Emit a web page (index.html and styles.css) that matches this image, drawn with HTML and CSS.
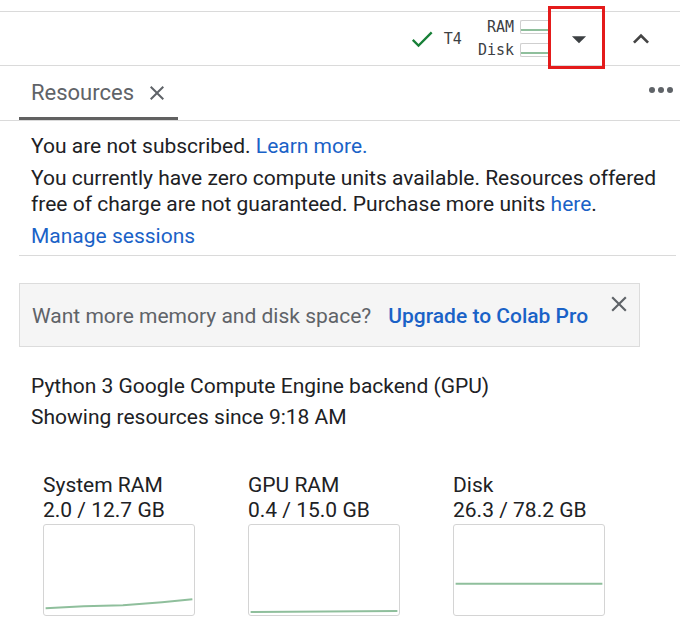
FILE: index.html
```html
<!DOCTYPE html>
<html>
<head>
<meta charset="utf-8">
<link rel="stylesheet" href="styles.css">
</head>
<body>
<div class="toolbar">
  <div class="status">
    <svg class="check" width="28" height="28" viewBox="0 0 24 24"><path d="M9 16.2 4.8 12l-1.4 1.4L9 19 21 7l-1.4-1.4z" fill="#188038"/></svg>
    <span class="mono gpu">T4</span>
    <div class="meters">
      <div class="meter"><span class="mono">RAM</span><span class="mini"><i style="bottom:2px"></i></span></div>
      <div class="meter"><span class="mono">Disk</span><span class="mini"><i style="bottom:2px"></i></span></div>
    </div>
  </div>
  <div class="drop">
    <svg width="34" height="34" viewBox="0 0 24 24"><path d="M7 10l5 5 5-5z" fill="#3c4043"/></svg>
  </div>
  <div class="collapse">
    <svg width="32" height="32" viewBox="0 0 24 24"><path d="M7.41 15.41 12 10.83l4.59 4.58L18 14l-6-6-6 6z" fill="#444"/></svg>
  </div>
</div>
<div class="tabbar">
  <div class="tab">
    <span class="tab-title">Resources</span>
    <svg class="tab-close" width="24" height="24" viewBox="0 0 24 24"><path d="M19 6.41 17.59 5 12 10.59 6.41 5 5 6.41 10.59 12 5 17.59 6.41 19 12 13.41 17.59 19 19 17.59 13.41 12z" fill="#5f6368"/></svg>
  </div>
  <div class="more"><i></i><i></i><i></i></div>
</div>
<div class="info">
  <p class="l1">You are not subscribed. <a>Learn more.</a></p>
  <p class="l2">You currently have zero compute units available. Resources offered free of charge are not guaranteed. Purchase more units <a>here</a>.</p>
  <p class="l3"><a>Manage sessions</a></p>
</div>
<div class="banner">
  <span class="banner-text">Want more memory and disk space?</span>
  <a class="banner-link">Upgrade to Colab Pro</a>
  <svg class="banner-close" width="26" height="26" viewBox="0 0 24 24"><path d="M19 6.41 17.59 5 12 10.59 6.41 5 5 6.41 10.59 12 5 17.59 6.41 19 12 13.41 17.59 19 19 17.59 13.41 12z" fill="#5f6368"/></svg>
</div>
<div class="backend">
  <p>Python 3 Google Compute Engine backend (GPU)</p>
  <p>Showing resources since 9:18 AM</p>
</div>
<div class="charts">
  <div class="chart">
    <div class="c-label">System RAM</div>
    <div class="c-value">2.0 / 12.7 GB</div>
    <svg class="c-box" width="152" height="92" viewBox="0 0 152 92"><polyline points="1,85 40,83 80,82 120,79 151,76" fill="none" stroke="#8fbf9c" stroke-width="2"/></svg>
  </div>
  <div class="chart">
    <div class="c-label">GPU RAM</div>
    <div class="c-value">0.4 / 15.0 GB</div>
    <svg class="c-box" width="152" height="92" viewBox="0 0 152 92"><polyline points="1,89 151,88" fill="none" stroke="#8fbf9c" stroke-width="2"/></svg>
  </div>
  <div class="chart">
    <div class="c-label">Disk</div>
    <div class="c-value">26.3 / 78.2 GB</div>
    <svg class="c-box" width="152" height="92" viewBox="0 0 152 92"><polyline points="1,60 151,60" fill="none" stroke="#8fbf9c" stroke-width="2"/></svg>
  </div>
</div>
</body>
</html>
```
FILE: styles.css
```css
* { box-sizing: border-box; }
body {
  margin: 0;
  font-family: Roboto, "Noto Sans", sans-serif;
  color: #202124;
  background: #fff;
  width: 680px;
  overflow: hidden;
}
p { margin: 0; }
a { color: #1a62c7; }

.toolbar {
  margin-top: 11px;
  height: 55px;
  border-top: 1px solid #dadada;
  border-bottom: 1px solid #dadada;
  display: flex;
  justify-content: flex-end;
  align-items: center;
}
.status {
  display: flex;
  align-items: center;
  height: 100%;
}
.check { margin-right: 8px; }
.mono {
  font-family: "DejaVu Sans Mono", "Liberation Mono", monospace;
  font-size: 15px;
  color: #3c4043;
}
.gpu { margin-right: 16px; }
.meters {
  display: flex;
  flex-direction: column;
  gap: 5px;
  align-items: flex-end;
}
.meter {
  display: flex;
  align-items: center;
  gap: 6px;
  height: 18px;
}
.mini {
  position: relative;
  width: 28px;
  height: 14px;
  border: 1px solid #cfcfcf;
  border-right: none;
  border-radius: 2px 0 0 2px;
  display: block;
}
.mini i {
  position: absolute;
  left: 0;
  right: 0;
  height: 2px;
  background: #8fbf9c;
}
.drop {
  position: relative;
  width: 57px;
  height: 100%;
  display: flex;
  align-items: center;
  justify-content: center;
  padding-left: 4px;
}
.drop::after {
  content: "";
  position: absolute;
  left: 0;
  right: 0;
  top: -6px;
  bottom: -4px;
  border: 3px solid #e41b1b;
}
.collapse {
  width: 75px;
  height: 100%;
  display: flex;
  align-items: center;
  justify-content: center;
  padding-right: 4px;
}

.tabbar {
  height: 55px;
  border-bottom: 1px solid #dadada;
  display: flex;
  justify-content: space-between;
  align-items: flex-end;
  padding-left: 19px;
}
.tab {
  height: 100%;
  width: 159px;
  display: flex;
  align-items: center;
  padding-left: 12px;
  gap: 11px;
  border-bottom: 3px solid #616161;
  padding-top: 2px;
}
.tab-title {
  font-size: 22px;
  color: #5f6368;
}
.more {
  align-self: flex-start;
  display: flex;
  gap: 3px;
  margin-top: 21px;
  margin-right: 7px;
}
.more i {
  width: 6px;
  height: 6px;
  border-radius: 50%;
  background: #5f6368;
}

.info {
  margin-left: 19px;
  margin-right: 4px;
  padding: 12px 0 6px 12px;
  border-bottom: 1px solid #dadada;
  font-size: 21px;
  line-height: 26px;
}
.info .l1 { margin-bottom: 6px; }
.info .l3 { margin-top: 6px; }

.banner {
  margin: 27px 0 0 19px;
  width: 621px;
  height: 64px;
  background: #f5f5f5;
  border: 1px solid #dcdcdc;
  display: flex;
  align-items: center;
  padding-left: 12px;
  padding-top: 1px;
  font-size: 21px;
  position: relative;
}
.banner-text { color: #5f6368; }
.banner-link {
  color: #1a62c7;
  font-weight: 500;
  margin-left: 17px;
}
.banner-close {
  position: absolute;
  right: 7px;
  top: 7px;
}

.backend {
  padding: 24px 0 0 31px;
  font-size: 21px;
  line-height: 31px;
}

.charts {
  display: flex;
  padding: 40px 0 0 43px;
  gap: 53px;
}
.chart {
  width: 152px;
  font-size: 21px;
  line-height: 25px;
}
.c-box {
  display: block;
  margin-top: 1px;
  border: 1px solid #d4d4d4;
  border-radius: 3px;
}
```
